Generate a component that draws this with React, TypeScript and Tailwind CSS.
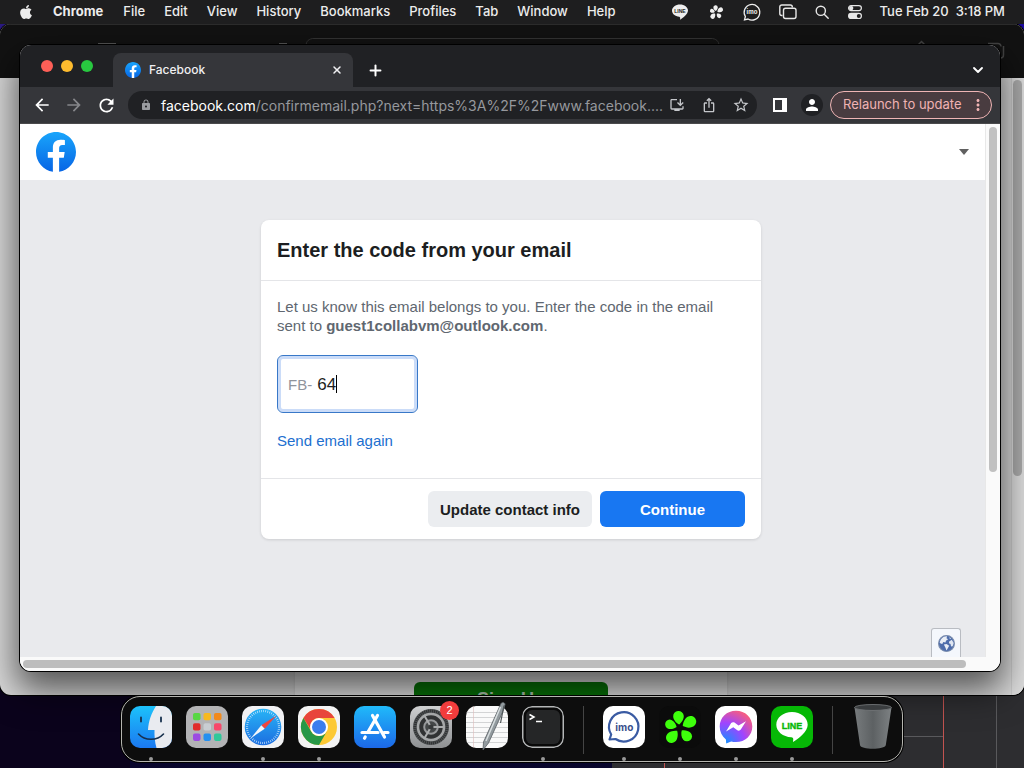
import type { ReactNode } from "react";
import { FaApple } from "react-icons/fa";
import {
  MdArrowBack,
  MdArrowForward,
  MdRefresh,
  MdLock,
  MdStarOutline,
  MdPerson,
  MdIosShare,
  MdMoreVert,
  MdInstallDesktop,
} from "react-icons/md";
import { ChevronDown, Plus, X } from "lucide-react";

const menus = ["File", "Edit", "View", "History", "Bookmarks", "Profiles", "Tab", "Window", "Help"];

const petals = [
  { angle: -5, scale: 1 },
  { angle: 60, scale: 1.08 },
  { angle: 138, scale: 0.95 },
  { angle: 220, scale: 1.05 },
  { angle: 291, scale: 0.88 },
];

function Petals({ fill }: { fill: string }) {
  return (
    <g fill={fill}>
      {petals.map((p) => (
        <path
          key={p.angle}
          d="M0-3.500C-2.500-5-5.300-8.500-5.300-11.800a5.300 5.300 0 0 1 10.600 0C5.300-8.500 2.500-5 0-3.500z"
          transform={`translate(20.500 22) rotate(${p.angle}) scale(${p.scale})`}
        />
      ))}
    </g>
  );
}

function StatusIcons() {
  return (
    <>
      <svg viewBox="0 0 20 20" className="size-5" aria-label="LINE">
        <path d="M10 2.500c4.400 0 8 2.700 8 6.100 0 3.500-5 7.400-8 9.200.3-1.500.4-2.700-.7-3C5.200 14.500 2 12 2 8.600 2 5.200 5.600 2.500 10 2.500z" fill="#eee" />
        <text x="10" y="10.500" textAnchor="middle" fontFamily="Liberation Sans, sans-serif" fontWeight="700" fontSize="5" fill="#222">LINE</text>
      </svg>
      <svg viewBox="3 2 35 38" className="size-5 p-[2px]" aria-label="ICQ">
        <Petals fill="#eee" />
      </svg>
      <svg viewBox="0 0 20 20" className="size-5" aria-label="imo">
        <path d="M3.400 14.500A7.800 7.800 0 1 1 6 17l-3.500.8z" fill="none" stroke="#eee" strokeWidth="1.300" />
        <text x="10" y="12" textAnchor="middle" fontFamily="Inter, sans-serif" fontWeight="700" fontSize="6" fill="#eee">imo</text>
      </svg>
      <svg viewBox="0 0 20 20" className="size-5" fill="none" stroke="#e8e8e8" strokeWidth="1.400" aria-label="Windows">
        <path d="M4.500 13.500h-.7A2 2 0 0 1 1.800 11.500V5a2 2 0 0 1 2-2h8.500a2 2 0 0 1 2 2v.5" />
        <rect x="5.500" y="6.200" width="12.500" height="10.300" rx="2" />
      </svg>
      <svg viewBox="0 0 16 16" className="size-4" fill="none" stroke="#e8e8e8" strokeWidth="1.400" strokeLinecap="round" aria-label="Search">
        <circle cx="6.800" cy="6.800" r="4.600" />
        <path d="m10.200 10.200 4 4" />
      </svg>
      <svg viewBox="0 0 18 18" className="size-[18px]" aria-label="Control Center">
        <rect x="2.600" y="2.600" width="12.800" height="5" rx="2.500" fill="none" stroke="#e8e8e8" strokeWidth="1.200" />
        <circle cx="5.200" cy="5.100" r="2.200" fill="#e8e8e8" />
        <rect x="2" y="9.800" width="14" height="6.200" rx="3.100" fill="#e8e8e8" />
        <circle cx="12.800" cy="12.900" r="2" fill="#1e1e1f" />
      </svg>
    </>
  );
}

function MenuBar() {
  return (
    <header className="relative z-10 flex h-6 items-center bg-[#1e1e1f] pr-[19px] pl-[18px] text-[13px] font-medium text-[#ececec]">
      <FaApple className="mr-[19px] size-4 shrink-0" />
      <nav className="flex flex-1 items-center gap-[19px]">
        <a href="#chrome" className="mr-px font-bold">Chrome</a>
        {menus.map((m) => (
          <a key={m} href={"#" + m}>{m}</a>
        ))}
      </nav>
      <div className="flex items-center gap-4">
        <StatusIcons />
        <time className="whitespace-pre">Tue Feb 20  3:18 PM</time>
      </div>
    </header>
  );
}

function Wallpaper() {
  return (
    <svg className="absolute inset-0 size-full" viewBox="0 0 1024 768" preserveAspectRatio="none" aria-hidden="true">
      <rect width="1024" height="768" fill="#0c0418" />
      <rect width="512" height="60" fill="#2b1a80" />
      <rect x="512" width="512" height="60" fill="#1c0aa0" />
      <rect y="690" width="130" height="78" fill="#0b031c" />
      <rect x="130" y="740" width="482" height="28" fill="#08052c" />
      <rect x="612" y="690" width="412" height="78" fill="#2d2d30" />
      <path d="M996.500 690v78M900 736.500h43" stroke="#59595c" />
      <path d="M664.500 690v78M943.500 690v78" stroke="#c25350" />
    </svg>
  );
}

function BackWindow() {
  return (
    <section className="absolute inset-x-0 top-6 bottom-[73px] flex flex-col overflow-hidden rounded-[11px] bg-[#d9d9d9] ring-1 ring-black" aria-label="Background window">
      <div className="flex h-[54px] shrink-0 items-start border-t border-[#2c2c2c] bg-[#121212] pt-[13px]">
        <svg className="w-full" height="30" viewBox="0 0 1024 30" preserveAspectRatio="none" fill="none" stroke="#444" aria-hidden="true">
          <path d="M98 5.500h18M279 5.500h8" stroke="#555" />
          <path d="M306 8c0-5 3-7.500 8-7.500h397c5 0 8 2.500 8 7.500" stroke="#333" />
          <path d="M918 7l3.500-3.500L925 7M988 5.500h10a3 3 0 0 1 3 3M1003.500 8v9a3 3 0 0 1-3 3" stroke="#444" strokeWidth="1.500" />
        </svg>
      </div>
      <div className="flex min-h-0 flex-1">
        <div className="flex flex-1 justify-center pl-[11px]">
          <div className="flex w-[432px] flex-col items-center justify-end bg-[#e4e4e4] shadow">
            <div className="flex h-[13px] w-[194px] justify-center overflow-hidden rounded-t-md bg-[#067306] pt-[6px] text-[18px] leading-[22px] font-bold text-[#b5c9b5]">
              Sign Up
            </div>
          </div>
        </div>
        <div className="w-[13px] shrink-0 border-l border-[#ccc] bg-[#ddd] pt-[2px] pl-px">
          <div className="h-[396px] w-[9px] rounded-full bg-[#aaa]" />
        </div>
      </div>
    </section>
  );
}

function TabStrip() {
  return (
    <div className="flex h-[42px] items-end bg-[#202124] font-[Inter,sans-serif]">
      <div className="flex w-[93px] items-center gap-2 self-center pl-[21px]">
        <button aria-label="Close window" className="size-3 rounded-full bg-[#fe5f57]" />
        <button aria-label="Minimize window" className="size-3 rounded-full bg-[#febb2e]" />
        <button aria-label="Zoom window" className="size-3 rounded-full bg-[#28c840]" />
      </div>
      <div className="flex h-[34px] w-60 items-center rounded-t-lg bg-[#35363a] pr-[10px] pl-3 text-[12px] font-medium text-[#f0f0f2]">
        <FacebookLogo id="tab-logo" className="size-4" />
        <span className="ml-2 flex-1">Facebook</span>
        <button aria-label="Close tab"><X className="size-3" strokeWidth={3} /></button>
      </div>
      <button aria-label="New tab" className="flex h-[34px] w-11 items-center justify-center text-white">
        <Plus className="size-[17px]" strokeWidth={2.8} />
      </button>
      <button aria-label="Search tabs" className="mr-[14px] ml-auto flex h-[34px] items-center text-white">
        <ChevronDown className="size-4" strokeWidth={2.8} />
      </button>
    </div>
  );
}

function FacebookLogo({ id, className }: { id: string; className: string }) {
  return (
    <svg viewBox="8 8 496 496" className={className} role="img" aria-label="Facebook">
      <defs>
        <linearGradient id={id} x1="0" y1="0" x2="0" y2="1">
          <stop offset="0" stopColor="#19a5fb" />
          <stop offset="1" stopColor="#0765e5" />
        </linearGradient>
      </defs>
      <path d="M140 100h240v280l-85 122a248 248 0 0 1-78 0l-77-122z" fill="#fff" />
      <path
        fill={`url(#${id})`}
        d="M504 256C504 119 393 8 256 8S8 119 8 256c0 123.780 90.690 226.380 209.250 245V327.690h-63V256h63v-54.640c0-62.150 37-96.480 93.670-96.480 27.140 0 55.520 4.840 55.520 4.840v61h-31.280c-30.800 0-40.410 19.120-40.410 38.730V256h68.780l-11 71.690h-57.780V501C413.310 482.380 504 379.780 504 256z"
      />
    </svg>
  );
}

const toolButton = "flex h-7 w-8 shrink-0 items-center justify-center";

function Toolbar() {
  return (
    <div className="flex h-9 items-center bg-[#35363a] pr-2 pl-[6px] font-[Inter,sans-serif] text-white">
      <button aria-label="Back" className={toolButton}><MdArrowBack className="size-5" /></button>
      <button aria-label="Forward" className={toolButton + " text-[#85868a]"}><MdArrowForward className="size-5" /></button>
      <button aria-label="Reload" className={toolButton}><MdRefresh className="size-[21px]" /></button>
      <div className="mr-[7px] ml-[6px] flex h-7 min-w-0 flex-1 items-center rounded-full bg-[#202124] pl-3 text-[14px] text-[#c4c6ca]">
        <MdLock className="size-3 shrink-0 text-[#9a9ca0]" />
        <label htmlFor="address" className="ml-[9px] text-white">facebook.com</label>
        <input
          id="address"
          readOnly
          value="/confirmemail.php?next=https%3A%2F%2Fwww.facebook...."
          className="min-w-0 flex-1 bg-transparent text-[#96989d] outline-none"
        />
        <button aria-label="Install" className="flex h-7 w-6 shrink-0 items-center justify-center"><MdInstallDesktop className="size-4" /></button>
        <button aria-label="Share" className="ml-1 flex h-7 w-8 shrink-0 items-center justify-center"><MdIosShare className="size-4" /></button>
        <button aria-label="Bookmark" className={toolButton}><MdStarOutline className="size-[18px]" /></button>
      </div>
      <button aria-label="Side panel" className={toolButton}>
        <svg viewBox="0 0 14 14" className="size-[14px]"><path fillRule="evenodd" fill="#fff" d="M0 0h14v14H0zM2 2v10h7V2z" /></svg>
      </button>
      <button aria-label="Profile" className={toolButton}>
        <span className="flex size-[22px] items-center justify-center rounded-full bg-[#202124]"><MdPerson className="size-[18px]" /></span>
      </button>
      <button className="ml-[2px] flex h-7 w-[162px] shrink-0 items-center justify-between rounded-full border border-[#efb5b5] bg-[#493c40] pr-1 pl-3 text-[13px] text-[#f0b3b3]">
        <span className="whitespace-nowrap">Relaunch to update</span>
        <MdMoreVert className="size-[18px] shrink-0" />
      </button>
    </div>
  );
}

function CodeCard() {
  return (
    <form className="w-[500px] rounded-lg bg-white text-[15px] leading-[19px] text-[#606770] shadow-[0_1px_3px_rgba(0,0,0,0.12)]">
      <h1 className="flex h-[61px] items-center border-b border-[#e4e5e8] px-4 text-[20px] leading-6 font-bold text-[#1c1e21]">
        Enter the code from your email
      </h1>
      <div className="px-4 pt-4 pb-7">
        <p>
          Let us know this email belongs to you. Enter the code in the email sent to{" "}
          <b>guest1collabvm@outlook.com</b>.
        </p>
        <div className="mt-5 flex h-[58px] w-[141px] items-center rounded-[6px] border border-[#3878c8] pl-[10px] ring-3 ring-[#cbdcf8] ring-inset">
          <label htmlFor="code" className="text-[#90949c]">FB-</label>
          <input id="code" defaultValue="64" className="ml-[5px] max-w-20 text-[17px] text-[#1c1e21] outline-none [field-sizing:content]" />
          <span className="h-[18px] w-px bg-black" />
        </div>
        <a href="#resend" className="mt-[18px] inline-block text-[#216fcf]">Send email again</a>
      </div>
      <div className="flex justify-end gap-2 border-t border-[#e4e5e8] px-4 py-3 font-bold">
        <button type="button" className="h-9 rounded-md bg-[#ebedf0] px-3 text-[#1c1e21]">Update contact info</button>
        <button type="button" className="h-9 w-[145px] rounded-md bg-[#1877f2] text-white">Continue</button>
      </div>
    </form>
  );
}

function Globe() {
  return (
    <svg viewBox="0 0 16 16" className="size-[17px]" aria-hidden="true">
      <circle cx="8" cy="8" r="7.500" fill="#4d6cab" stroke="#7d8fae" />
      <path d="M2.500 4.500C4 2 6.500 1 8.500 1.200L8 3l1.500 1-2 1.500L7 7 5 6.500 4 8.500 2.500 8 1.500 7zM5.500 9l2.500-.5 2.500 1.700-1.300 2.300L8 14.500 7 12z" fill="#e8edf5" />
      <path d="M10.500 6 13 4.500l1.800 3-1 3-1.500.3-.5-2.300-1.500-.8zM10.500 2l1.800 1-1 1z" fill="#dfe6f1" />
    </svg>
  );
}

function ChromeWindow() {
  return (
    <main className="absolute top-[45px] right-6 bottom-[97px] left-5 flex flex-col overflow-hidden rounded-[11px] bg-white shadow-[0_0_0_1px_#000,0_16px_34px_4px_rgba(0,0,0,0.6)]">
      <TabStrip />
      <Toolbar />
      <div className="flex min-h-0 flex-1 border-t border-[#4a4a4c]">
        <div className="relative min-w-0 flex-1 overflow-hidden bg-[#e9eaed]">
          <div className="w-[calc(100%+17px)]">
            <header className="flex h-14 items-center justify-between bg-white pr-[33px] pl-4">
              <a href="#home"><FacebookLogo id="page-logo" className="size-10" /></a>
              <button aria-label="Account menu">
                <svg viewBox="0 0 10 6" className="h-[6px] w-[10px]"><path d="M0 0h10L5 6z" fill="#606060" /></svg>
              </button>
            </header>
            <div className="flex justify-center pt-10">
              <CodeCard />
            </div>
          </div>
          <button aria-label="Translate" className="absolute right-6 bottom-0 flex h-[29px] w-[30px] items-center justify-center rounded-t-[3px] border border-b-0 border-[#b9bcc2] bg-[#f4f7fc]">
            <Globe />
          </button>
        </div>
        <div className="w-[15px] shrink-0 border-l border-[#e8e8e8] bg-[#fafafa] pt-[3px] pl-[3px]">
          <div className="h-[345px] w-2 rounded-full bg-[#c1c1c1]" />
        </div>
      </div>
      <div className="flex h-[14px] shrink-0 bg-[#fafafa] pt-[3px] pr-[34px] pl-[3px]">
        <div className="h-2 flex-1 rounded-full bg-[#bdbdbd]" />
      </div>
    </main>
  );
}

function Finder() {
  return (
    <svg viewBox="0 0 42 42" className="size-full">
      <defs>
        <linearGradient id="finder" x1="0" y1="0" x2="0" y2="1"><stop stopColor="#1cc2fb" /><stop offset="1" stopColor="#1b78f0" /></linearGradient>
      </defs>
      <rect width="42" height="42" fill="url(#finder)" />
      <path d="M26 0C21.500 7 18.500 15 18 24h6.500c-.2 6 .3 12 2 18H42V0z" fill="#e9ebf0" />
      <path d="M11 11.500v4M31 11.500v4" stroke="#17304d" strokeWidth="1.800" strokeLinecap="round" />
      <path d="M8.500 28c6.500 7 18.500 7 25 0" fill="none" stroke="#17304d" strokeWidth="1.600" strokeLinecap="round" />
    </svg>
  );
}

const tiles = ["#58d744", "#f7b921", "#f28a1d", "#e12b2b", "#c9cdd2", "#f7476a", "#9c4be2", "#2590f0", "#2fc89a"];

function Launchpad() {
  return (
    <svg viewBox="0 0 42 42" className="size-full">
      <rect width="42" height="42" fill="#b3b3b5" />
      {tiles.map((c, i) => (
        <rect key={c} x={7 + (i % 3) * 10.5} y={7 + Math.floor(i / 3) * 10.3} width="7.500" height="7.300" rx="1.800" fill={c} />
      ))}
    </svg>
  );
}

function Safari() {
  return (
    <svg viewBox="0 0 42 42" className="size-full">
      <defs>
        <linearGradient id="safari" x1="0" y1="0" x2="0" y2="1"><stop stopColor="#28b4f6" /><stop offset="1" stopColor="#1c6de0" /></linearGradient>
      </defs>
      <rect width="42" height="42" fill="#f1f1f3" />
      <circle cx="21" cy="21" r="18.300" fill="url(#safari)" />
      <circle cx="21" cy="21" r="16" fill="none" stroke="#c9e6fc" strokeWidth="2.200" strokeDasharray=".7 1.390" />
      <path d="M34.500 9.500 19.300 19.200l3.400 3.600z" fill="#f0453e" />
      <path d="M8.500 32.500 19.300 19.200l3.400 3.600z" fill="#f3f6fa" />
    </svg>
  );
}

function Chrome() {
  return (
    <svg viewBox="0 0 42 42" className="size-full">
      <rect width="42" height="42" fill="#f3f3f3" />
      <circle cx="21" cy="21" r="18" fill="#fcc934" />
      <path d="M5.400 12A18 18 0 0 1 36.600 12H21a9 9 0 0 0-7.800 4.500l-.5 7z" fill="#e8453c" />
      <path d="M5.400 12A18 18 0 0 0 21 39l7.800-13.500A9 9 0 0 1 13.200 25.500z" fill="#279847" />
      <circle cx="21" cy="21" r="9" fill="#fff" />
      <circle cx="21" cy="21" r="7" fill="#3b7ded" />
    </svg>
  );
}

function AppStore() {
  return (
    <svg viewBox="0 0 42 42" className="size-full">
      <defs>
        <linearGradient id="store" x1="0" y1="0" x2="0" y2="1"><stop stopColor="#20bafa" /><stop offset="1" stopColor="#1c68e8" /></linearGradient>
      </defs>
      <rect width="42" height="42" fill="url(#store)" />
      <g stroke="#fff" strokeWidth="3.200" strokeLinecap="round" fill="none">
        <path d="M18.500 9.500 30.500 31M23.500 9.500 14 26M8 26.500h16M30 26.500h4M11.200 31l-.7 1.200" />
      </g>
    </svg>
  );
}

function Settings() {
  return (
    <svg viewBox="0 0 42 42" className="size-full">
      <defs>
        <linearGradient id="prefs" x1="0" y1="0" x2="0" y2="1"><stop stopColor="#cfd0d1" /><stop offset="1" stopColor="#8e9092" /></linearGradient>
      </defs>
      <rect width="42" height="42" fill="url(#prefs)" />
      <circle cx="21" cy="21" r="18" fill="#55585a" />
      <circle cx="21" cy="21" r="16" fill="none" stroke="#303233" strokeWidth="3" strokeDasharray="1.200 .8" />
      <circle cx="21" cy="21" r="13" fill="#303233" stroke="#a5a7a8" strokeWidth="2.500" />
      <circle cx="21" cy="21" r="6.800" fill="#444748" stroke="#96989a" strokeWidth="2" />
      <path d="m21 21-7-12M21 21h13M21 21l-7 12" stroke="#aaacad" strokeWidth="2" />
      <circle cx="21" cy="21" r="2.500" fill="#36393a" />
    </svg>
  );
}

function TextEdit() {
  return (
    <svg viewBox="0 0 42 42" className="size-full">
      <rect width="42" height="42" fill="#fafafa" />
      <path d="M0 6.500h42M0 11.500h42M0 16.500h42M0 21.500h42M0 26.500h42M0 31.500h42M0 36.500h42" stroke="#c9cacc" strokeWidth=".8" />
      <path d="M7.500 0v42" stroke="#dbb" strokeWidth=".6" />
    </svg>
  );
}

function Terminal() {
  return (
    <svg viewBox="0 0 42 42" className="size-full">
      <rect width="42" height="42" rx="10" fill="#b4b6b7" />
      <rect x="1.500" y="1.500" width="39" height="39" rx="8.500" fill="#090909" />
      <rect x="4" y="4" width="34" height="34" rx="6" fill="#252627" />
      <path d="m7.500 8.500 4.500 2.500-4.500 2.500M14 15.500h6" fill="none" stroke="#fff" strokeWidth="1.500" />
    </svg>
  );
}

function Imo() {
  return (
    <svg viewBox="0 0 42 42" className="size-full">
      <rect width="42" height="42" fill="#fff" />
      <path d="M8.200 28.500A14.700 14.700 0 1 1 12.500 33l-6 .5z" fill="none" stroke="#3a5ba3" strokeWidth="2.200" strokeLinejoin="round" />
      <text x="21.300" y="24.500" textAnchor="middle" fontFamily="Inter, sans-serif" fontWeight="700" fontSize="10" fill="#3a4f8c">imo</text>
    </svg>
  );
}

function Icq() {
  return (
    <svg viewBox="0 0 42 42" className="size-full">
      <rect width="42" height="42" fill="#0b0b0b" />
      <Petals fill="#3eff0c" />
    </svg>
  );
}

function Messenger() {
  return (
    <svg viewBox="0 0 42 42" className="size-full">
      <defs>
        <radialGradient id="msgr" cx=".15" cy="1" r="1.150"><stop stopColor="#0a94ff" /><stop offset=".55" stopColor="#a044ff" /><stop offset="1" stopColor="#ff5f74" /></radialGradient>
      </defs>
      <rect width="42" height="42" fill="#fff" />
      <path d="M21 4.800c9.200 0 16.300 6.700 16.300 15.600S30.200 36 21 36c-1.700 0-3.300-.2-4.800-.6l-5 2.200-.3-4.200C7 30 4.700 25.500 4.700 20.400 4.700 11.500 11.800 4.800 21 4.800z" fill="url(#msgr)" />
      <path d="m11 25.500 5-8.200c.8-1.200 2.400-1.500 3.500-.7l4 3L31 15.300l-5.200 8.200c-.8 1.200-2.300 1.500-3.500.7l-4-3z" fill="#fff" />
    </svg>
  );
}

function LineApp() {
  return (
    <svg viewBox="0 0 42 42" className="size-full">
      <rect width="42" height="42" fill="#06b806" />
      <path d="M21 6c8.800 0 15.700 5.600 15.700 12.700 0 6.500-8.700 13.800-14.700 17.300.5-2.700.7-4.400-1.600-4.700C12 30.700 5.300 25.600 5.300 18.700 5.300 11.600 12.200 6 21 6z" fill="#fff" />
      <text x="21" y="22.500" textAnchor="middle" fontFamily="Liberation Sans, sans-serif" fontWeight="700" fontSize="9" fill="#06b806" stroke="#06b806" strokeWidth=".4">LINE</text>
    </svg>
  );
}

function DockItem({ name, running, plain, children, over }: { name: string; running?: boolean; plain?: boolean; children: ReactNode; over?: ReactNode }) {
  return (
    <li className="relative flex flex-col items-center gap-[9px]">
      <button aria-label={name} className={plain ? "size-[42px]" : "size-[42px] overflow-hidden rounded-[10px]"}>
        {children}
      </button>
      {running && <span className="size-1 rounded-full bg-[#999]" />}
      {over}
    </li>
  );
}

function Dock() {
  return (
    <footer className="absolute inset-x-0 bottom-[6px] flex justify-center">
      <ul className="flex h-[66px] gap-[14px] rounded-[19px] border border-[#b5b5b0] bg-[#0d0d0d] px-2 pt-[9px] ring-1 ring-black">
        <DockItem name="Finder" running><Finder /></DockItem>
        <DockItem name="Launchpad"><Launchpad /></DockItem>
        <DockItem name="Safari" running><Safari /></DockItem>
        <DockItem name="Chrome" running><Chrome /></DockItem>
        <DockItem name="App Store"><AppStore /></DockItem>
        <DockItem
          name="System Preferences"
          over={<span className="absolute -top-[5px] -right-[7px] flex size-[19px] items-center justify-center rounded-full bg-[#f23c3c] text-[11px] text-white">2</span>}
        >
          <Settings />
        </DockItem>
        <DockItem
          name="TextEdit"
          over={
            <svg viewBox="0 0 24 50" className="pointer-events-none absolute -top-[5px] left-[16px] h-[50px] w-6" aria-hidden="true">
              <path d="M19 2.500c1.500-2 4-1 4 1L21.500 9 6.500 42 1 49l.5-8z" fill="#929a9e" stroke="#596064" strokeWidth=".8" />
              <path d="M18.500 6 4 40" stroke="#d8dee0" strokeWidth="1.500" />
              <path d="M22 4.500 18.500 22" stroke="#4d5457" strokeWidth="1.200" />
            </svg>
          }
        >
          <TextEdit />
        </DockItem>
        <DockItem name="Terminal" running><Terminal /></DockItem>
        <li className="mx-[5px] h-12 w-px bg-[#444]" aria-hidden="true" />
        <DockItem name="imo" running><Imo /></DockItem>
        <DockItem name="ICQ" running><Icq /></DockItem>
        <DockItem name="Messenger" running><Messenger /></DockItem>
        <DockItem name="LINE" running><LineApp /></DockItem>
        <li className="mx-[5px] h-12 w-px bg-[#444]" aria-hidden="true" />
        <DockItem name="Trash" plain>
          <svg viewBox="0 0 42 48" className="-mt-1 h-12 w-[42px]">
            <defs>
              <linearGradient id="trash"><stop stopColor="#777b7d" /><stop offset=".5" stopColor="#5d6163" /><stop offset="1" stopColor="#7d8183" /></linearGradient>
            </defs>
            <path d="M2.500 5.500 8 43c.5 5 25 5 25.800 0L39.500 5.500z" fill="url(#trash)" />
            <ellipse cx="21" cy="5.500" rx="18.500" ry="3" fill="#3a3d3f" stroke="#707476" strokeWidth=".9" />
          </svg>
        </DockItem>
      </ul>
    </footer>
  );
}

export default function App() {
  return (
    <div className="relative h-screen overflow-hidden bg-black font-['Liberation_Sans',Arial,sans-serif]">
      <Wallpaper />
      <div className="font-[Inter,sans-serif]"><MenuBar /></div>
      <BackWindow />
      <ChromeWindow />
      <Dock />
    </div>
  );
}
